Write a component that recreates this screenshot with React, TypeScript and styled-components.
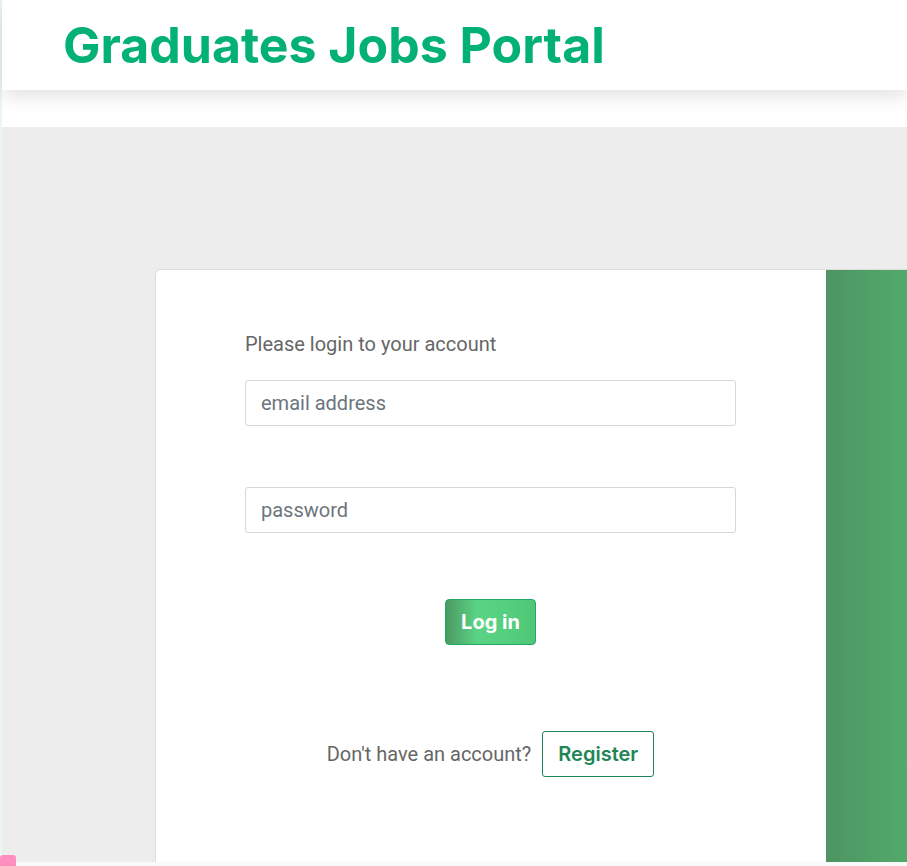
import React from 'react';
import styled, { createGlobalStyle } from 'styled-components';

const GlobalStyle = createGlobalStyle`
  html, body {
    margin: 0;
    padding: 0;
    background: #eaf6ef;
    overflow: hidden;
  }
  body {
    font-family: Roboto, "Liberation Sans", sans-serif;
  }
  * {
    box-sizing: border-box;
  }
`;

const Page = styled.div`
  margin-left: 2px;
  height: 866px;
  display: flex;
  flex-direction: column;
  background: #fafafa;
  position: relative;
`;

const Header = styled.header`
  height: 90px;
  background: #ffffff;
  display: flex;
  align-items: center;
  padding-left: 61px;
  box-shadow: 0 6px 18px rgba(0, 0, 0, 0.12);
  position: relative;
  z-index: 2;
`;

const Title = styled.h1`
  margin: 0;
  font-family: Inter, "Noto Sans", sans-serif;
  font-weight: 700;
  font-size: 50px;
  color: #03b174;
  line-height: 1;
`;

const Spacer = styled.div`
  height: 37px;
  background: #ffffff;
`;

const Main = styled.main`
  height: 735px;
  background: #ededed;
  padding-top: 142px;
  padding-left: 153px;
  overflow: hidden;
`;

const Card = styled.div`
  display: flex;
  width: 1342px;
  height: 700px;
  background: #ffffff;
  border: 1px solid #dcdcdc;
  border-radius: 6px;
  overflow: hidden;
`;

const FormSide = styled.section`
  width: 670px;
  padding: 62px 90px 0 89px;
  display: flex;
  flex-direction: column;
`;

const Prompt = styled.p`
  margin: 0 0 24px;
  font-size: 20px;
  color: #666666;
  line-height: 24px;
`;

const Field = styled.input<{ $gap?: number }>`
  width: 100%;
  height: 46px;
  padding: 0 15px;
  border: 1px solid #d3d6da;
  border-radius: 3px;
  font-family: Roboto, "Liberation Sans", sans-serif;
  font-size: 20px;
  color: #333;
  outline: none;
  margin-bottom: ${(p) => p.$gap ?? 0}px;
  &::placeholder {
    color: #6c757d;
  }
`;

const Center = styled.div<{ $top?: number }>`
  display: flex;
  justify-content: center;
  align-items: center;
  gap: 11px;
  margin-top: ${(p) => p.$top ?? 0}px;
`;

const LoginButton = styled.button`
  height: 46px;
  padding: 0 15px;
  border: 1px solid #22a66c;
  border-radius: 4px;
  background: linear-gradient(to right, #4b9a62 0%, #5bd385 35%, #55cf80 65%, #50c676 100%);
  color: #ffffff;
  font-family: Inter, "Noto Sans", sans-serif;
  font-weight: 700;
  font-size: 20px;
  cursor: pointer;
`;

const Question = styled.span`
  font-size: 20px;
  color: #666666;
`;

const RegisterButton = styled.button`
  height: 46px;
  padding: 0 15px;
  border: 1px solid #1e8656;
  border-radius: 3px;
  background: #ffffff;
  color: #1e8653;
  font-family: Inter, "Noto Sans", sans-serif;
  font-weight: 600;
  font-size: 20px;
  cursor: pointer;
`;

const GreenSide = styled.aside`
  flex: 1;
  background: linear-gradient(to right, #4d9462 0px, #53aa6c 81px, #5cc07a 670px);
`;

const DevBadge = styled.div`
  position: absolute;
  left: -2px;
  bottom: -4px;
  width: 16px;
  height: 15px;
  border-radius: 3px;
  background: #ff8ec0;
  z-index: 5;
`;

const App = () => (
  <>
    <GlobalStyle />
    <Page>
      <Header>
        <Title>Graduates Jobs Portal</Title>
      </Header>
      <Spacer />
      <Main>
        <Card>
          <FormSide>
            <Prompt>Please login to your account</Prompt>
            <Field type="email" placeholder="email address" $gap={61} />
            <Field type="password" placeholder="password" $gap={66} />
            <Center>
              <LoginButton>Log in</LoginButton>
            </Center>
            <Center $top={86}>
              <Question>Don't have an account?</Question>
              <RegisterButton>Register</RegisterButton>
            </Center>
          </FormSide>
          <GreenSide />
        </Card>
      </Main>
      <DevBadge />
    </Page>
  </>
);

export default App;
